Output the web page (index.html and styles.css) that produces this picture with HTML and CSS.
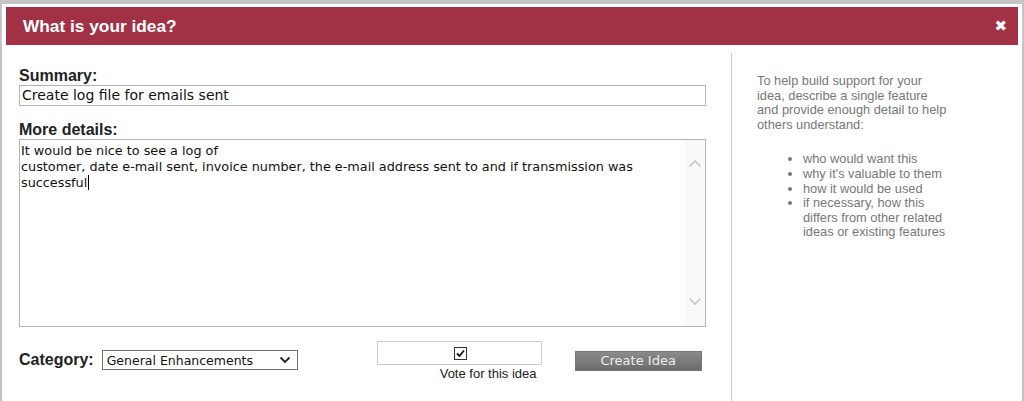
FILE: index.html
```html
<!DOCTYPE html>
<html lang="en">

<head>
     <meta charset="UTF-8">
     <meta name="viewport" content="width=device-width, initial-scale=1.0">
     <title>What is your idea?</title>
     <link rel="stylesheet" href="styles.css">
</head>

<body>
     <div class="dialog">
          <div class="titlebar">
               <span class="title">What is your idea?</span>
               <span class="close">&#x2716;</span>
          </div>

          <div class="content">
               <div class="main">
                    <div class="field-label">Summary:</div>
                    <div class="text-input">Create log file for emails sent</div>

                    <div class="field-label details-label">More details:</div>
                    <div class="details">
                         <div class="details-text">It would be nice to see a log of<br>customer, date e-mail sent, invoice number, the e-mail address sent to and if transmission was<br>successful<span class="caret"></span></div>
                         <div class="scrollbar">
                              <svg width="14" height="10" viewBox="0 0 14 10"><path d="M1.5 8.5 L7 3 L12.5 8.5" fill="none" stroke="#c8c8c8" stroke-width="1.6"/></svg>
                              <svg width="14" height="10" viewBox="0 0 14 10"><path d="M1.5 1.5 L7 7 L12.5 1.5" fill="none" stroke="#c8c8c8" stroke-width="1.6"/></svg>
                         </div>
                    </div>

                    <div class="footer">
                         <div class="category">
                              <span class="field-label">Category:</span>
                              <div class="select">
                                   <span>General Enhancements</span>
                                   <svg width="12" height="8" viewBox="0 0 12 8"><path d="M1.5 1.5 L6 6 L10.5 1.5" fill="none" stroke="#222" stroke-width="1.8"/></svg>
                              </div>
                         </div>
                         <div class="vote">
                              <div class="vote-box">
                                   <span class="checkbox">
                                        <svg width="11" height="11" viewBox="0 0 11 11"><path d="M2 5.5 L4.5 8 L9 2.5" fill="none" stroke="#111" stroke-width="1.8"/></svg>
                                   </span>
                              </div>
                              <div class="vote-label">Vote for this idea</div>
                         </div>
                         <div class="create-btn">Create Idea</div>
                    </div>
               </div>

               <div class="aside">
                    <p>To help build support for your idea, describe a single feature and provide enough detail to help others understand:</p>
                    <ul>
                         <li>who would want this</li>
                         <li>why it's valuable to them</li>
                         <li>how it would be used</li>
                         <li>if necessary, how this differs from other related ideas or existing features</li>
                    </ul>
               </div>
          </div>
     </div>
</body>

</html>
```

FILE: styles.css
```css
html,
body {
     margin: 0;
     padding: 0;
     background-color: #fff;
     overflow: hidden;
}

.dialog {
     height: 401px;
     box-sizing: border-box;
     border: 2px solid #c4c4c4;
     border-top-width: 4px;
     border-bottom: none;
     padding: 3px 4px 0 4px;
     background-color: #fff;
     font-family: "Liberation Sans", Arial, sans-serif;
     color: #222;
}

.titlebar {
     height: 38px;
     background-color: #a13246;
     color: #fff;
     display: flex;
     align-items: center;
     justify-content: space-between;
     padding: 0 11px 0 17px;
}

.title {
     font-size: 17.3px;
     font-weight: bold;
}

.close {
     font-size: 15px;
     font-weight: bold;
     font-family: "DejaVu Sans", sans-serif;
}

.content {
     display: flex;
     margin-top: 8px;
}

.main {
     width: 687px;
     margin-left: 13px;
     padding-top: 14px;
}

.field-label {
     font-size: 16px;
     font-weight: bold;
     line-height: 18px;
     color: #222;
}

.text-input {
     height: 19px;
     border: 1px solid #b4b4b4;
     font-family: "DejaVu Sans", Verdana, sans-serif;
     font-size: 14px;
     line-height: 19px;
     padding-left: 2px;
     color: #111;
}

.details-label {
     margin-top: 15px;
}

.details {
     display: flex;
     height: 186px;
     border: 1px solid #b4b4b4;
}

.details-text {
     flex: 1;
     padding: 3px 0 0 1px;
     font-family: "DejaVu Sans", Verdana, sans-serif;
     font-size: 12.8px;
     line-height: 16px;
     color: #111;
}

.caret {
     display: inline-block;
     width: 1px;
     height: 15px;
     background-color: #000;
     vertical-align: -3px;
     margin-left: 1px;
}

.scrollbar {
     width: 20px;
     background-color: #f9f9f9;
     display: flex;
     flex-direction: column;
     justify-content: space-between;
     align-items: center;
     padding: 18px 0 19px 0;
}

.footer {
     display: flex;
     align-items: flex-start;
     margin-top: 14px;
}

.category {
     display: flex;
     align-items: center;
     margin-top: 9px;
}

.select {
     width: 184px;
     height: 18px;
     margin-left: 8px;
     border: 1px solid #707070;
     display: flex;
     align-items: center;
     justify-content: space-between;
     padding: 0 6px 0 4px;
     font-family: "DejaVu Sans", Verdana, sans-serif;
     font-size: 12.5px;
     color: #111;
}

.vote {
     margin-left: 79px;
     width: 165px;
}

.vote-box {
     height: 22px;
     border: 1px solid #ccc;
     display: flex;
     justify-content: center;
     align-items: center;
}

.checkbox {
     width: 11px;
     height: 11px;
     border: 1px solid #333;
     display: flex;
     align-items: center;
     justify-content: center;
     background-color: #fff;
     margin-left: 3px;
}

.vote-label {
     font-size: 13px;
     line-height: 14px;
     margin-top: 2px;
     padding-left: 63px;
     color: #222;
}

.create-btn {
     width: 127px;
     height: 20px;
     margin-left: 33px;
     margin-top: 10px;
     background: linear-gradient(#8a8a8a, #6c6c6c);
     border: 1px solid #777;
     box-sizing: border-box;
     color: #eee;
     font-family: "DejaVu Sans", Verdana, sans-serif;
     font-size: 13px;
     line-height: 18px;
     text-align: center;
}

.aside {
     margin-left: 25px;
     height: 337px;
     border-left: 1px solid #ccc;
     padding: 21px 0 0 25px;
     width: 215px;
     font-size: 12.8px;
     line-height: 14.6px;
     color: #777;
}

.aside p {
     width: 192px;
     margin: 0 0 20px 0;
}

.aside ul {
     width: 152px;
     margin: 0;
     padding-left: 46px;
}
```
